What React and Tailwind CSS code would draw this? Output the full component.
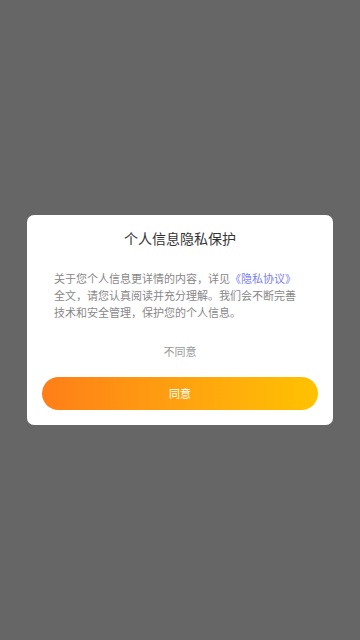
export default function App() {
  return (
    <div
      className="w-[360px] h-[640px] bg-[#666666] flex items-center justify-center"
      style={{ fontFamily: '"Noto Sans CJK SC", "Noto Sans", sans-serif' }}
    >
      <div className="w-[306px] bg-white rounded-[7px] flex flex-col pt-[12px] pb-[15px]">
        <div className="text-center text-[14px] leading-[22px] text-[#333333]">个人信息隐私保护</div>
        <p className="mt-[21px] px-[27px] text-[11px] leading-[17px] text-[#888888]">
          关于您个人信息更详情的内容，详见<span className="text-[#7b7ff0]">《隐私协议》</span>全文，请您认真阅读并充分理解。我们会不断完善技术和安全管理，保护您的个人信息。
        </p>
        <div className="mt-[22px] text-center text-[11px] leading-[17px] text-[#999999]">不同意</div>
        <div className="mt-[17px] mx-[15px] h-[33px] rounded-full bg-gradient-to-r from-[#ff7e17] to-[#ffc200] flex items-center justify-center text-[11px] text-white">
          同意
        </div>
      </div>
    </div>
  );
}
